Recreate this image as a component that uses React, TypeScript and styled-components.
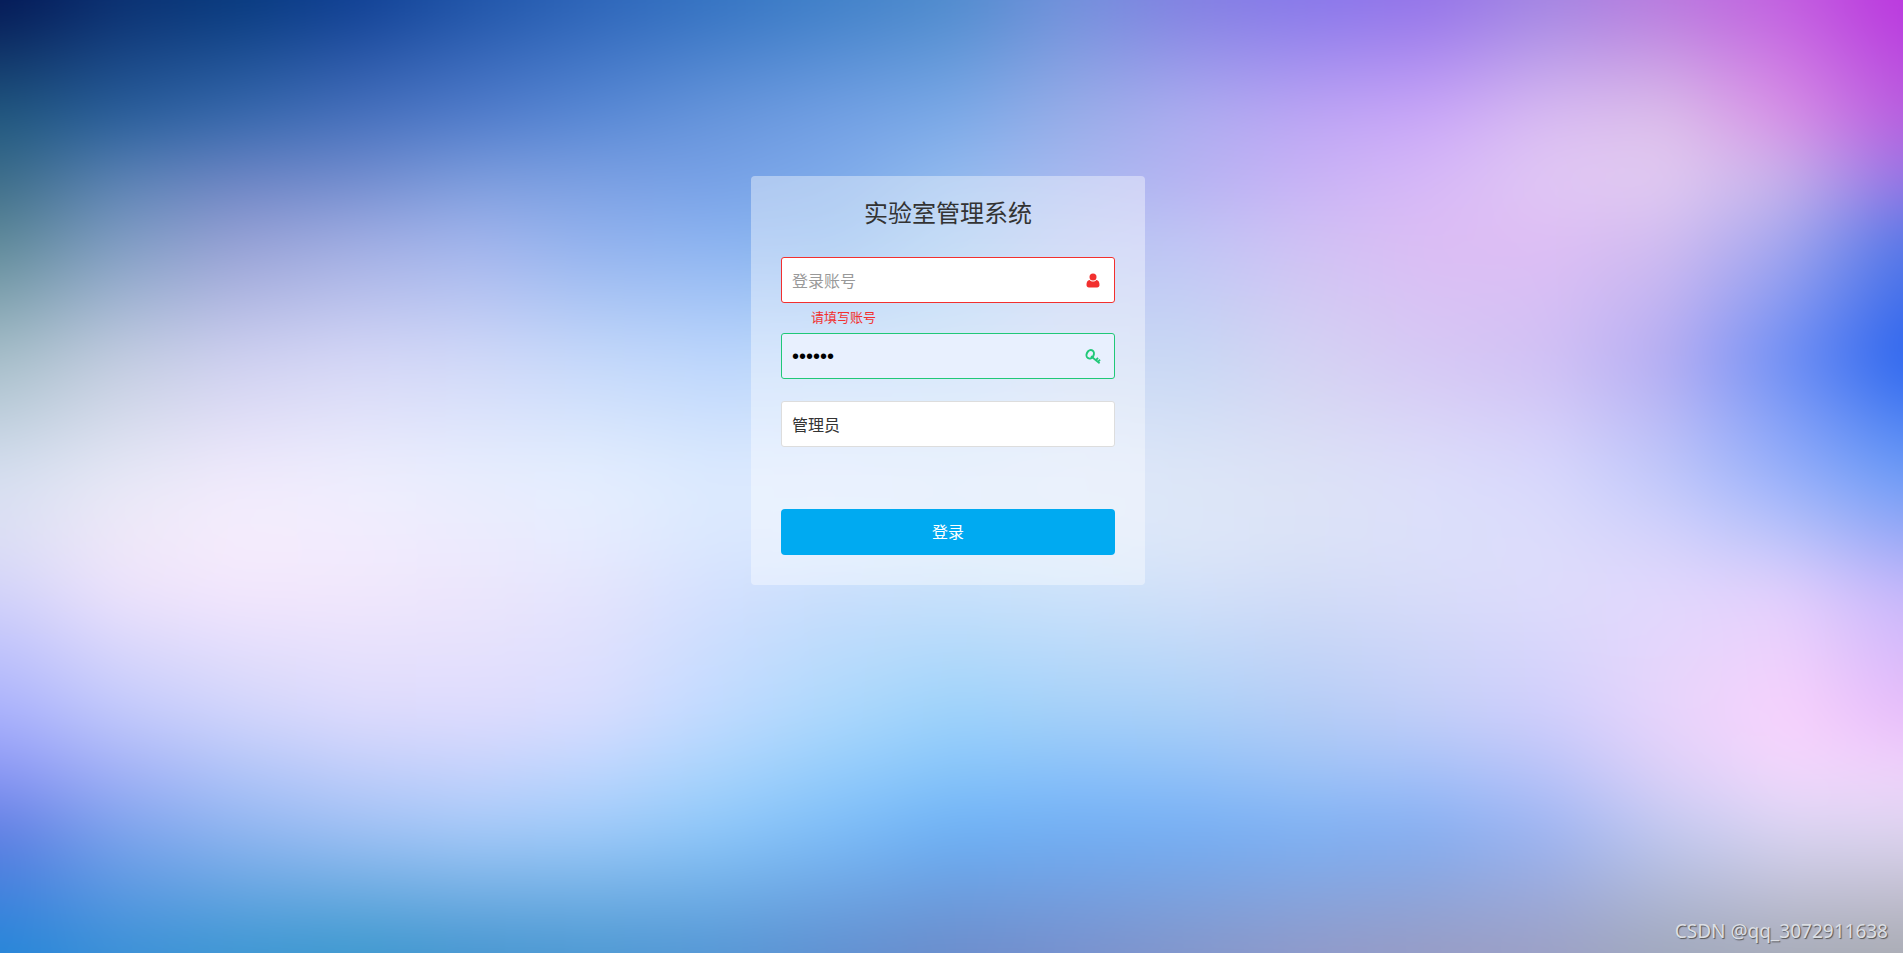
import React, { useState } from "react";
import styled, { createGlobalStyle } from "styled-components";

const GlobalStyle = createGlobalStyle`
  *, *::before, *::after { box-sizing: border-box; }
  body {
    margin: 0;
    color: #333;
    font-family: "Noto Sans CJK SC", "Noto Sans", sans-serif;
    font-size: 16px;
  }
`;

/* Rows of the gradient mesh: vertical position, then the colours left to right. */
const mesh = (
  [
    [0, "031654 0a2f70 07397d 0f3f93 1f54a8 2c64b8 3473c2 4080c8 4f8bcd 7190db 817fe2 8777ea 9373e9 a285e2 b879de c25fe0 bb35df"],
    [1, "215a80 2a609c 386aae 4872be 527dcc 5a8ad6 6896dc 73a0e4 7caae8 99aee8 aeaef0 bea6f4 cba8f8 dabcf2 dcc0ea d892e6 b85fde"],
    [1.5, "3c6c88 5b82b4 6c84c4 728cce 7c9cdc 7b9fe2 76a0e6 7eaaea 92baee a6b8f0 b6b2f2 c8b2f6 d6b8f8 e0c8f4 e2cbf1 c8b4ea 9874e4"],
    [2, "5b8796 7d9bc2 949fd4 9eabe2 a0b3ec 90b1ee 8ab2f0 85b4ee 9dc5f0 b7c5f2 c0c4f4 d0c0f4 dcbcf4 dfbef4 d2bdf0 a8a8ee 5878e6"],
    [3, "a6bec8 c2cce0 ced0f0 d4d6f6 d0d8f8 c4d8fa bcd6fc bcd8fa bed9f8 cad9f5 c8d8f4 d4d2f2 d6c8f4 d0c0f4 b4acf2 6e8ef4 2a64ee"],
    [4, "d6dff0 e6e8f6 f0eafc eeeefd e8eefe e4eefe dceafe dee9fd dce9fc dfe9fa dde6f7 dce2f6 dcdefa d8d8fc c0c8fa 98b0fa 6c9cf6"],
    [4.5, "dcdff4 efe8f8 f5edfc f2ecfd ecebfd e6ecfe dae8fe dbe9fe d6e8fc dae8fa dde7f8 dce3f7 dce0fa dcdcfb d4d2fb bcc4fa 98a8f6"],
    [5, "d2d2fa ece2fb f3e6fc f1e7fc ece6fc e4e4fd d4e0fe c8defc c6e0fb cce2fa d2e0f9 d2dcf7 d8dcf9 dedcfb e2d8fc e4d0fc c8b8fb"],
    [6, "a8b0fc c0c8fb d0d4fb dcdafc dedbfd d8dcfe c0daff acd8fc 9cd2fa a4d0f9 aad0f8 b4ccf6 c2cef8 d0cefb e8d4fb f8d2fc e8bcfa"],
    [6.5, "8a96f4 a2b0f6 b0c4f8 bfcdfa c4d2fc bcd6fe a8d4fc 94ccfb 86c4fa 88c0fa 90c0f8 9cc2f6 a4c0f8 b8c2f8 dcd0f8 f2d8fc f0d4fb"],
    [7, "5f7de2 7ba2ec 8eb4f0 9cbff4 a2c8f8 9cc9f9 8cc6f9 7cbcf8 6cb0f5 70aef4 74aef4 7cb0f4 84aef2 9cb4f2 c0c8f0 d8d4f2 dcd4f0"],
    [8, "2486d8 3a90d6 3c96d2 3c98ce 4696d0 4c98d2 5496d4 6090d0 6c8cca 7890cc 8496ca 9099c8 989cc4 9ca0c4 a0a8bc a6abb8 a8abb2"],
  ] as [number, string][]
).map(([y, row]) => ({ y, colors: row.split(" ").map((c) => `#${c}`) }));

const COLS = mesh[0].colors.length - 1;
const ROWS = mesh[mesh.length - 1].y;

const Page = styled.main`
  position: relative;
  isolation: isolate;
  display: flex;
  flex-direction: column;
  align-items: center;
  min-height: 100vh;
  padding: 176px 27px 60px 20px;
  overflow: hidden;
`;

const Backdrop = styled.svg`
  position: absolute;
  inset: 0;
  z-index: -1;
  width: 100%;
  height: 100%;
`;

const Card = styled.form`
  display: flex;
  flex-direction: column;
  width: 100%;
  max-width: 394px;
  padding: 16px 30px 30px;
  border-radius: 4px;
  background: rgba(255, 255, 255, 0.4);
`;

const Title = styled.h1`
  margin: 0 0 25px;
  font-size: 24px;
  font-weight: 400;
  line-height: 40px;
  text-align: center;
`;

const tones = { plain: "#ddd", error: "#f2302f", ok: "#20c878" };
type Tone = keyof typeof tones;

const Field = styled.div<{ $tone: Tone }>`
  display: flex;
  align-items: center;
  height: 46px;
  border: 1px solid ${(p) => tones[p.$tone]};
  border-radius: 3px;
  background: ${(p) => (p.$tone === "ok" ? "#e8f0fe" : "#fff")};
  color: ${(p) => tones[p.$tone]};
`;

const TextInput = styled.input`
  flex: 1;
  min-width: 0;
  height: 100%;
  padding: 0 10px;
  border: 0;
  outline: 0;
  background: transparent;
  color: #000;
  font: inherit;
  &::placeholder { color: #999; opacity: 1; }
  &[type="password"] { font-family: "Liberation Sans", sans-serif; font-size: 20px; }
`;

const RoleSelect = styled.select`
  flex: 1;
  height: 100%;
  padding: 0 10px;
  border: 0;
  outline: 0;
  appearance: none;
  background: transparent;
  color: #333;
  font: inherit;
`;

const Icon = styled.svg`
  width: 16px;
  height: 16px;
  margin-right: 13px;
`;

const Message = styled.p`
  height: 30px;
  margin: 0;
  padding-left: 30px;
  color: #f2302f;
  font-size: 13px;
  line-height: 28px;
`;

const Gap = styled.div<{ $size: number }>`
  height: ${(p) => p.$size}px;
`;

const Submit = styled.button`
  height: 46px;
  padding: 0 10px 2px;
  border: 0;
  border-radius: 4px;
  background: #00aaf1;
  color: #fff;
  font: inherit;
  cursor: pointer;
`;

const Watermark = styled.span`
  position: absolute;
  right: 15px;
  bottom: 8px;
  color: #dcdfe4;
  font-family: "Noto Sans", sans-serif;
  font-size: 19px;
  line-height: 28px;
  text-shadow: 1px 1px 1px #555;
`;

function MeshBackdrop() {
  const sheet = { x: -1, y: -1, width: COLS + 2, height: ROWS + 2 };
  return (
    <Backdrop viewBox={`0 0 ${COLS} ${ROWS}`} preserveAspectRatio="none" aria-hidden="true">
      <defs>
        <filter id="soften" filterUnits="userSpaceOnUse" {...sheet} colorInterpolationFilters="sRGB">
          <feGaussianBlur stdDeviation="0.22" />
        </filter>
        {mesh.map((row, r) => (
          <React.Fragment key={r}>
            <linearGradient id={`row${r}`} gradientUnits="userSpaceOnUse" x1="0" y1="0" x2={COLS} y2="0">
              {row.colors.map((c, i) => (
                <stop key={i} offset={i / COLS} stopColor={c} />
              ))}
            </linearGradient>
            {r > 0 && (
              <>
                <linearGradient id={`fade${r}`} gradientUnits="userSpaceOnUse" x1="0" y1={mesh[r - 1].y} x2="0" y2={row.y}>
                  <stop offset="0" stopColor="#fff" stopOpacity="0" />
                  <stop offset="1" stopColor="#fff" />
                </linearGradient>
                <mask id={`mask${r}`} maskUnits="userSpaceOnUse" {...sheet}>
                  <rect {...sheet} fill={`url(#fade${r})`} />
                </mask>
              </>
            )}
          </React.Fragment>
        ))}
      </defs>
      <g filter="url(#soften)">
        {mesh.map((_, r) => (
          <rect key={r} {...sheet} fill={`url(#row${r})`} mask={r > 0 ? `url(#mask${r})` : undefined} />
        ))}
      </g>
    </Backdrop>
  );
}

export default function App() {
  const [account, setAccount] = useState("");
  const [password, setPassword] = useState("123456");

  return (
    <>
      <GlobalStyle />
      <Page>
        <MeshBackdrop />
        <Card onSubmit={(e) => e.preventDefault()}>
          <Title>实验室管理系统</Title>
          <Field $tone="error">
            <TextInput
              type="text"
              aria-label="登录账号"
              aria-describedby="account-error"
              placeholder="登录账号"
              value={account}
              onChange={(e) => setAccount(e.target.value)}
            />
            <Icon viewBox="0 -1 16 16" fill="currentColor" aria-hidden="true">
              <circle cx="8" cy="4" r="3.5" />
              <path d="M4.600 7C5.600 8 6.700 8.500 8 8.500s2.400-.5 3.400-1.500c2.200.2 3.100 2.200 3.100 5 0 1.600-1 2.500-2.400 2.500H3.900C2.500 14.500 1.500 13.600 1.500 12c0-2.800.9-4.800 3.100-5z" />
            </Icon>
          </Field>
          <Message id="account-error">请填写账号</Message>
          <Field $tone="ok">
            <TextInput
              type="password"
              aria-label="登录密码"
              value={password}
              onChange={(e) => setPassword(e.target.value)}
            />
            <Icon viewBox="0 -1 16 16" fill="none" stroke="currentColor" strokeWidth="2" aria-hidden="true">
              <ellipse cx="5.200" cy="5.300" rx="3.500" ry="4.400" transform="rotate(28 5.200 5.300)" />
              <path d="M6 7.300 14.600 14.200M11 11.200l2-2.400M13 12.800l2-2.200" strokeWidth="1.800" />
            </Icon>
          </Field>
          <Gap $size={22} />
          <Field $tone="plain">
            <RoleSelect aria-label="用户角色" defaultValue="admin">
              <option value="admin">管理员</option>
            </RoleSelect>
          </Field>
          <Gap $size={62} />
          <Submit type="submit">登录</Submit>
        </Card>
        <Watermark>CSDN @qq_3072911638</Watermark>
      </Page>
    </>
  );
}
